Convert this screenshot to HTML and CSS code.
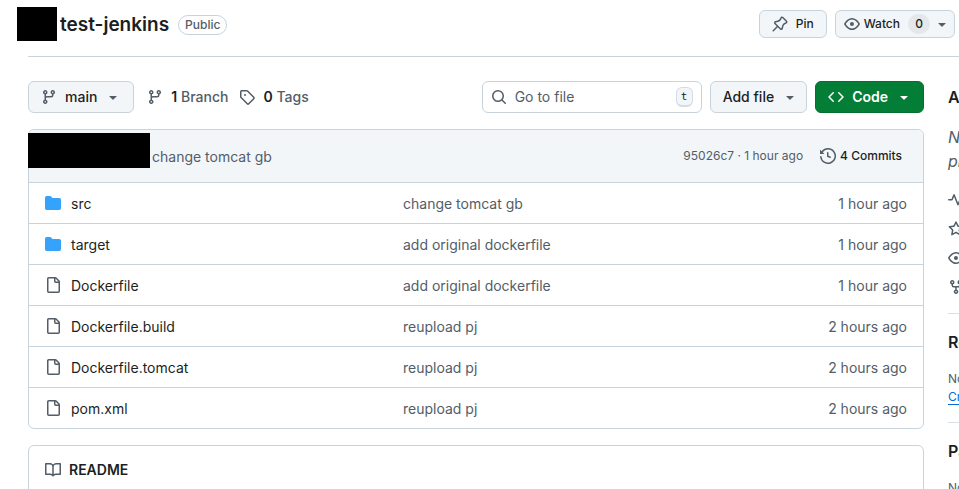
FILE: index.html
```html
<!DOCTYPE html>
<html lang="en">
<head>
    <meta charset="UTF-8">
    <meta name="viewport" content="width=device-width, initial-scale=1.0">
    <title>test-jenkins</title>
    <link rel="stylesheet" href="styles.css">
</head>
<body>

<!-- Icons used more than once -->
<svg class="sprite" width="0" height="0" aria-hidden="true">
    <symbol id="branch" viewBox="0 0 16 16"><path d="M9.5 3.25a2.25 2.25 0 1 1 3 2.122V6A2.5 2.5 0 0 1 10 8.5H6a1 1 0 0 0-1 1v1.128a2.251 2.251 0 1 1-1.5 0V5.372a2.25 2.25 0 1 1 1.5 0v1.836A2.493 2.493 0 0 1 6 7h4a1 1 0 0 0 1-1v-.628A2.25 2.25 0 0 1 9.5 3.25Zm-6 0a.75.75 0 1 0 1.5 0 .75.75 0 0 0-1.5 0Zm8.25-.75a.75.75 0 1 0 0 1.5.75.75 0 0 0 0-1.5ZM4.25 12a.75.75 0 1 0 0 1.5.75.75 0 0 0 0-1.5Z"/></symbol>
    <symbol id="caret" viewBox="0 0 16 16"><path d="m4.427 7.427 3.396 3.396a.25.25 0 0 0 .354 0l3.396-3.396A.25.25 0 0 0 11.396 7H4.604a.25.25 0 0 0-.177.427Z"/></symbol>
    <symbol id="eye" viewBox="0 0 16 16"><path d="M8 2c1.981 0 3.671.992 4.933 2.078 1.27 1.091 2.187 2.345 2.637 3.023a1.62 1.62 0 0 1 0 1.798c-.45.678-1.367 1.932-2.637 3.023C11.67 13.008 9.981 14 8 14c-1.981 0-3.671-.992-4.933-2.078C1.797 10.83.88 9.576.43 8.898a1.62 1.62 0 0 1 0-1.798c.45-.677 1.367-1.931 2.637-3.022C4.33 2.992 6.019 2 8 2ZM1.679 7.932a.12.12 0 0 0 0 .136c.411.622 1.241 1.75 2.366 2.717C5.176 11.758 6.527 12.5 8 12.5c1.473 0 2.825-.742 3.955-1.715 1.124-.967 1.954-2.096 2.366-2.717a.12.12 0 0 0 0-.136c-.412-.621-1.242-1.75-2.366-2.717C10.824 4.242 9.473 3.5 8 3.5c-1.473 0-2.825.742-3.955 1.715-1.124.967-1.954 2.096-2.366 2.717ZM8 10a2 2 0 1 1-.001-3.999A2 2 0 0 1 8 10Z"/></symbol>
    <symbol id="folder" viewBox="0 0 16 16"><path d="M1.75 1A1.75 1.75 0 0 0 0 2.75v10.5C0 14.216.784 15 1.75 15h12.5A1.75 1.75 0 0 0 16 13.25v-8.5A1.75 1.75 0 0 0 14.25 3H7.5a.25.25 0 0 1-.2-.1l-.9-1.2C6.07 1.26 5.55 1 5 1H1.75Z"/></symbol>
    <symbol id="file" viewBox="0 0 16 16"><path d="M2 1.75C2 .784 2.784 0 3.75 0h6.586c.464 0 .909.184 1.237.513l2.914 2.914c.329.328.513.773.513 1.237v9.586A1.75 1.75 0 0 1 13.25 16h-9.5A1.75 1.75 0 0 1 2 14.25Zm1.75-.25a.25.25 0 0 0-.25.25v12.5c0 .138.112.25.25.25h9.5a.25.25 0 0 0 .25-.25V6h-2.75A1.75 1.75 0 0 1 9 4.25V1.5Zm6.75.062V4.25c0 .138.112.25.25.25h2.688l-.011-.013-2.914-2.914-.013-.011Z"/></symbol>
</svg>

<div class="page">
    <header class="repo-header">
        <span class="owner"></span>
        <h1>test-jenkins</h1>
        <span class="label">Public</span>
    </header>

    <div class="repo-actions">
        <button class="btn small pin" type="button">
            <svg class="icon" viewBox="0 0 16 16" aria-hidden="true"><path d="m11.294.984 3.722 3.722a1.75 1.75 0 0 1-.504 2.826l-1.327.613a3.089 3.089 0 0 0-1.707 2.084l-.584 2.454c-.317 1.332-1.972 1.8-2.94.832L5.75 11.311 1.78 15.28a.749.749 0 1 1-1.06-1.06l3.969-3.97-2.204-2.204c-.968-.968-.5-2.623.832-2.94l2.454-.584a3.08 3.08 0 0 0 2.084-1.707l.613-1.327a1.75 1.75 0 0 1 2.826-.504ZM6.283 9.723l2.732 2.731a.25.25 0 0 0 .42-.119l.584-2.454a4.586 4.586 0 0 1 2.537-3.098l1.328-.613a.25.25 0 0 0 .072-.404l-3.722-3.722a.25.25 0 0 0-.404.072l-.613 1.328a4.584 4.584 0 0 1-3.098 2.537l-2.454.584a.25.25 0 0 0-.119.42l2.731 2.732Z"/></svg>
            Pin
        </button>
        <button class="btn small watch" type="button">
            <svg class="icon" aria-hidden="true"><use href="#eye"/></svg>
            Watch
            <span class="counter">0</span>
            <svg class="icon" aria-hidden="true"><use href="#caret"/></svg>
        </button>
    </div>

    <div class="layout">
        <main>
            <div class="toolbar">
                <button class="btn branch-btn" type="button">
                    <svg class="icon" aria-hidden="true"><use href="#branch"/></svg>
                    main
                    <svg class="icon" aria-hidden="true"><use href="#caret"/></svg>
                </button>
                <a class="stat" href="#">
                    <svg class="icon" aria-hidden="true"><use href="#branch"/></svg>
                    <span><strong>1</strong> Branch</span>
                </a>
                <a class="stat tags" href="#">
                    <svg class="icon" viewBox="0 0 16 16" aria-hidden="true"><path d="M1 7.775V2.75C1 1.784 1.784 1 2.75 1h5.025c.464 0 .91.184 1.238.513l6.25 6.25a1.75 1.75 0 0 1 0 2.474l-5.026 5.026a1.75 1.75 0 0 1-2.474 0l-6.25-6.25A1.752 1.752 0 0 1 1 7.775Zm1.5 0c0 .066.026.13.073.177l6.25 6.25a.25.25 0 0 0 .354 0l5.025-5.025a.25.25 0 0 0 0-.354l-6.25-6.25a.25.25 0 0 0-.177-.073H2.75a.25.25 0 0 0-.25.25ZM6 5a1 1 0 1 1 0 2 1 1 0 0 1 0-2Z"/></svg>
                    <span><strong>0</strong> Tags</span>
                </a>
                <label class="search">
                    <svg class="icon" viewBox="0 0 16 16" aria-hidden="true"><path d="M10.68 11.74a6 6 0 0 1-7.922-8.982 6 6 0 0 1 8.982 7.922l3.04 3.04a.749.749 0 1 1-1.06 1.06ZM11.5 7a4.499 4.499 0 1 0-8.997 0A4.499 4.499 0 0 0 11.5 7Z"/></svg>
                    <input type="text" placeholder="Go to file" aria-label="Go to file">
                    <kbd>t</kbd>
                </label>
                <button class="btn" type="button">
                    Add file
                    <svg class="icon" aria-hidden="true"><use href="#caret"/></svg>
                </button>
                <button class="btn primary" type="button">
                    <svg class="icon" viewBox="0 0 16 16" aria-hidden="true"><path d="m11.28 3.22 4.25 4.25a.75.75 0 0 1 0 1.06l-4.25 4.25a.749.749 0 1 1-1.06-1.06L13.94 8l-3.72-3.72a.749.749 0 1 1 1.06-1.06Zm-6.56 0a.749.749 0 1 1 1.06 1.06L2.06 8l3.72 3.72a.749.749 0 1 1-1.06 1.06L.47 8.53a.75.75 0 0 1 0-1.06Z"/></svg>
                    Code
                    <svg class="icon" aria-hidden="true"><use href="#caret"/></svg>
                </button>
            </div>

            <section class="box">
                <div class="commit">
                    <span class="author"></span>
                    <a class="message" href="#">change tomcat gb</a>
                    <span class="hash">95026c7 · 1 hour ago</span>
                    <a class="history" href="#">
                        <svg class="icon" viewBox="0 0 16 16" aria-hidden="true"><path d="m.427 1.927 1.215 1.215a8.002 8.002 0 1 1-1.6 5.685.75.75 0 1 1 1.493-.154 6.5 6.5 0 1 0 1.18-4.458l1.358 1.358A.25.25 0 0 1 3.896 6H.25A.25.25 0 0 1 0 5.75V2.104a.25.25 0 0 1 .427-.177ZM7.75 4a.75.75 0 0 1 .75.75v2.992l2.028.812a.75.75 0 0 1-.557 1.392l-2.5-1A.751.751 0 0 1 7 8.25v-3.5A.75.75 0 0 1 7.75 4Z"/></svg>
                        4 Commits
                    </a>
                </div>
                <table class="files">
                    <tbody>
                        <tr>
                            <td class="name"><a href="#"><svg class="icon folder" aria-hidden="true"><use href="#folder"/></svg>src</a></td>
                            <td>change tomcat gb</td>
                            <td class="age">1 hour ago</td>
                        </tr>
                        <tr>
                            <td class="name"><a href="#"><svg class="icon folder" aria-hidden="true"><use href="#folder"/></svg>target</a></td>
                            <td>add original dockerfile</td>
                            <td class="age">1 hour ago</td>
                        </tr>
                        <tr>
                            <td class="name"><a href="#"><svg class="icon" aria-hidden="true"><use href="#file"/></svg>Dockerfile</a></td>
                            <td>add original dockerfile</td>
                            <td class="age">1 hour ago</td>
                        </tr>
                        <tr>
                            <td class="name"><a href="#"><svg class="icon" aria-hidden="true"><use href="#file"/></svg>Dockerfile.build</a></td>
                            <td>reupload pj</td>
                            <td class="age">2 hours ago</td>
                        </tr>
                        <tr>
                            <td class="name"><a href="#"><svg class="icon" aria-hidden="true"><use href="#file"/></svg>Dockerfile.tomcat</a></td>
                            <td>reupload pj</td>
                            <td class="age">2 hours ago</td>
                        </tr>
                        <tr>
                            <td class="name"><a href="#"><svg class="icon" aria-hidden="true"><use href="#file"/></svg>pom.xml</a></td>
                            <td>reupload pj</td>
                            <td class="age">2 hours ago</td>
                        </tr>
                    </tbody>
                </table>
            </section>

            <section class="box readme">
                <h2>
                    <svg class="icon" viewBox="0 0 16 16" aria-hidden="true"><path d="M0 1.75A.75.75 0 0 1 .75 1h4.253c1.227 0 2.317.59 3 1.501A3.743 3.743 0 0 1 11.006 1h4.245a.75.75 0 0 1 .75.75v10.5a.75.75 0 0 1-.75.75h-4.507a2.25 2.25 0 0 0-1.591.659l-.622.621a.75.75 0 0 1-1.06 0l-.622-.621A2.25 2.25 0 0 0 5.258 13H.75a.75.75 0 0 1-.75-.75Zm7.251 10.324.004-5.073-.002-2.253A2.25 2.25 0 0 0 5.003 2.5H1.5v9h3.757a3.75 3.75 0 0 1 1.994.574ZM8.755 4.75l-.004 7.322a3.752 3.752 0 0 1 1.992-.572H14.5v-9h-3.495a2.25 2.25 0 0 0-2.25 2.25Z"/></svg>
                    README
                </h2>
            </section>
        </main>

        <aside>
            <section>
                <h2>About</h2>
                <p class="description">No description, website, or topics provided.</p>
                <ul>
                    <li><svg class="icon" viewBox="0 0 16 16" aria-hidden="true"><path d="M6 2c.306 0 .582.187.696.471L10 10.731l1.304-3.26A.751.751 0 0 1 12 7h3.25a.75.75 0 0 1 0 1.5h-2.742l-1.812 4.528a.751.751 0 0 1-1.392 0L6 4.77 4.696 8.03A.75.75 0 0 1 4 8.5H.75a.75.75 0 0 1 0-1.5h2.742l1.812-4.529A.751.751 0 0 1 6 2Z"/></svg>Activity</li>
                    <li><svg class="icon" viewBox="0 0 16 16" aria-hidden="true"><path d="M8 .25a.75.75 0 0 1 .673.418l1.882 3.815 4.21.612a.75.75 0 0 1 .416 1.279l-3.046 2.97.719 4.192a.751.751 0 0 1-1.088.791L8 12.347l-3.766 1.98a.75.75 0 0 1-1.088-.79l.72-4.194L.818 6.374a.75.75 0 0 1 .416-1.28l4.21-.611L7.327.668A.75.75 0 0 1 8 .25Zm0 2.445L6.615 5.5a.75.75 0 0 1-.564.41l-3.097.45 2.24 2.184a.75.75 0 0 1 .216.664l-.528 3.084 2.769-1.456a.75.75 0 0 1 .698 0l2.77 1.456-.53-3.084a.75.75 0 0 1 .216-.664l2.24-2.183-3.096-.45a.75.75 0 0 1-.564-.41L8 2.694Z"/></svg>0 stars</li>
                    <li><svg class="icon" aria-hidden="true"><use href="#eye"/></svg>0 watching</li>
                    <li><svg class="icon" viewBox="0 0 16 16" aria-hidden="true"><path d="M5 5.372v.878c0 .414.336.75.75.75h4.5a.75.75 0 0 0 .75-.75v-.878a2.25 2.25 0 1 1 1.5 0v.878a2.25 2.25 0 0 1-2.25 2.25h-1.5v2.128a2.251 2.251 0 1 1-1.5 0V8.5h-1.5A2.25 2.25 0 0 1 3.5 6.25v-.878a2.25 2.25 0 1 1 1.5 0ZM5 3.25a.75.75 0 1 0-1.5 0 .75.75 0 0 0 1.5 0Zm6.75.75a.75.75 0 1 0 0-1.5.75.75 0 0 0 0 1.5Zm-3 8.75a.75.75 0 1 0-1.5 0 .75.75 0 0 0 1.5 0Z"/></svg>0 forks</li>
                </ul>
            </section>
            <section>
                <h2>Releases</h2>
                <p>No releases published</p>
                <a href="#">Create a new release</a>
            </section>
            <section>
                <h2>Packages</h2>
                <p>No packages published</p>
            </section>
        </aside>
    </div>
</div>

</body>
</html>
```
FILE: styles.css
```css
* {
    box-sizing: border-box;
}
body {
    margin: 0;
    height: 100vh;
    overflow: hidden;
    background-color: #fff;
    color: #1b1f24;
    font-family: Inter, "Liberation Sans", sans-serif;
    font-size: 14px;
    line-height: 20px;
}
h1, h2, p, ul {
    margin: 0;
    padding: 0;
}
a {
    color: inherit;
    text-decoration: none;
}
.sprite {
    position: absolute;
}
.icon {
    width: 16px;
    height: 16px;
    flex: none;
    fill: #535d68;
}
.page {
    display: grid;
    grid-template-columns: 1fr auto;
}

/* Repository header */
.repo-header {
    display: flex;
    align-items: center;
    padding: 7px 0 13px 17px;
}
.owner {
    align-self: flex-start;
    width: 40px;
    height: 34px;
    margin-right: 3px;
    background-color: #000;
}
h1 {
    font-size: 19px;
    line-height: 36px;
    font-weight: 600;
}
.label {
    margin-left: 9px;
    padding: 0 6px;
    border: 1px solid #c8d3db;
    border-radius: 10px;
    font-size: 12px;
    line-height: 18px;
    font-weight: 500;
    color: #535d68;
}
.repo-actions {
    display: flex;
    align-items: flex-start;
    gap: 8px;
    padding: 10px 4px 0 0;
}
.btn {
    display: flex;
    align-items: center;
    gap: 8px;
    height: 32px;
    padding: 0 8px 0 12px;
    border: 1px solid #c8d3db;
    border-radius: 6px;
    background-color: #f3f6f9;
    color: #1b1f24;
    font-family: inherit;
    font-size: 14px;
    line-height: 20px;
    font-weight: 500;
    white-space: nowrap;
    cursor: pointer;
}
.btn.small {
    height: 28px;
    font-size: 12px;
}
.btn.pin {
    padding: 0 12px;
}
.btn.watch {
    gap: 4px;
    padding: 0 4px 0 8px;
}
.btn.branch-btn {
    padding: 0 12px;
}
.counter {
    min-width: 22px;
    margin-left: 4px;
    border-radius: 10px;
    background-color: #e4e8eb;
    text-align: center;
}
.btn.primary {
    padding: 0 11px 0 12px;
    border-color: #04702f;
    background-color: #047d37;
    color: #fff;
    font-weight: 600;
}
.btn.primary .icon {
    fill: #fff;
}

/* Files column and sidebar */
.layout {
    grid-column: 1 / -1;
    display: flex;
    gap: 24px;
    margin-left: 28px;
    padding-top: 24px;
    border-top: 1px solid #c8d3db;
}
main {
    flex: 1;
}
.toolbar {
    display: flex;
    align-items: center;
    gap: 8px;
    margin-bottom: 16px;
}
.stat {
    display: flex;
    align-items: center;
    gap: 8px;
    padding-left: 5px;
    color: #535d68;
    font-weight: 500;
}
.stat.tags {
    padding-left: 3px;
}
.stat strong {
    color: #1b1f24;
    font-weight: 600;
}
.search {
    display: flex;
    align-items: center;
    gap: 8px;
    width: 220px;
    height: 32px;
    margin-left: auto;
    padding: 0 8px;
    border: 1px solid #c8d3db;
    border-radius: 6px;
}
.search input {
    flex: 1;
    min-width: 0;
    padding: 0;
    border: 0;
    outline: 0;
    background: none;
    font: inherit;
}
.search input::placeholder {
    color: #535d68;
    opacity: 1;
}
kbd {
    width: 17px;
    height: 20px;
    border: 1px solid #d3dce3;
    border-bottom-width: 2px;
    border-radius: 6px;
    background-color: #f3f6f9;
    font-family: "DejaVu Sans Mono", monospace;
    font-size: 11px;
    line-height: 18px;
    text-align: center;
}
.box {
    border: 1px solid #c8d3db;
    border-radius: 6px;
}
.commit {
    display: flex;
    align-items: flex-start;
    height: 52px;
    padding: 3px 21px 0 0;
    border-radius: 5px 5px 0 0;
    background-color: #f3f6f9;
    color: #535d68;
}
.author {
    width: 122px;
    height: 35px;
    margin: 0 2px 0 -1px;
    background-color: #000;
}
.message {
    margin-top: 14px;
}
.hash {
    margin: 13px 17px 0 auto;
    font-size: 12px;
}
.history {
    display: flex;
    align-items: center;
    gap: 4px;
    margin-top: 13px;
    color: #1b1f24;
    font-size: 12px;
    font-weight: 500;
}
.files {
    width: 100%;
    border-spacing: 0;
    table-layout: fixed;
}
.files td {
    height: 41px;
    padding: 2px 0 0;
    border-top: 1px solid #c8d3db;
    color: #535d68;
}
.files .name {
    width: 374px;
    padding-left: 16px;
}
.files .name a {
    display: flex;
    align-items: center;
    gap: 10px;
    color: #1b1f24;
}
.files .icon {
    margin-bottom: 2px;
}
.files .age {
    width: 140px;
    padding-right: 16px;
    text-align: right;
}
.folder {
    fill: #35a2fc;
}
.readme {
    margin-top: 16px;
    padding: 14px 16px 60px;
}
.readme h2 {
    display: flex;
    align-items: center;
    gap: 8px;
    font-size: 14px;
    line-height: 20px;
    font-weight: 600;
}

aside {
    width: 296px;
    margin-right: -285px;
    flex: none;
    color: #535d68;
    font-size: 12px;
    line-height: 18px;
}
aside section {
    padding: 16px 0;
    border-bottom: 1px solid #d9e0e6;
}
aside section:first-child {
    padding-top: 4px;
}
aside h2 {
    margin-bottom: 16px;
    color: #1b1f24;
    font-size: 16px;
    line-height: 24px;
    font-weight: 600;
}
aside .description {
    margin-bottom: 16px;
    font-size: 16px;
    line-height: 24px;
    font-style: italic;
}
aside li {
    display: flex;
    align-items: center;
    gap: 8px;
    margin-bottom: 8px;
    font-size: 14px;
    line-height: 21px;
}
aside li:last-child {
    margin-bottom: 0;
}
aside a {
    color: #0969da;
    text-decoration: underline;
    text-underline-offset: 3px;
}
```
